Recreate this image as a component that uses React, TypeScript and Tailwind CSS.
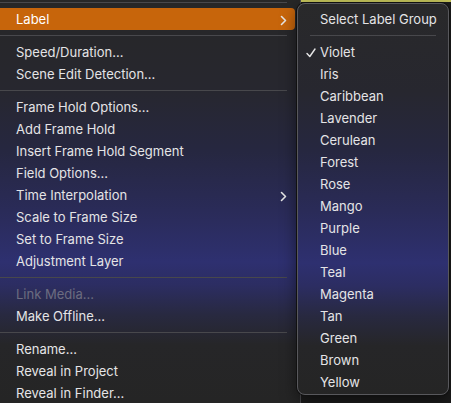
import React from 'react';

type Item = { label: string; sub?: boolean; disabled?: boolean; active?: boolean } | 'sep';

const mainItems: Item[] = [
  { label: 'Label', sub: true, active: true },
  'sep',
  { label: 'Speed/Duration...' },
  { label: 'Scene Edit Detection...' },
  'sep',
  { label: 'Frame Hold Options...' },
  { label: 'Add Frame Hold' },
  { label: 'Insert Frame Hold Segment' },
  { label: 'Field Options...' },
  { label: 'Time Interpolation', sub: true },
  { label: 'Scale to Frame Size' },
  { label: 'Set to Frame Size' },
  { label: 'Adjustment Layer' },
  'sep',
  { label: 'Link Media...', disabled: true },
  { label: 'Make Offline...' },
  'sep',
  { label: 'Rename...' },
  { label: 'Reveal in Project' },
  { label: 'Reveal in Finder...' },
];

const labels = [
  'Violet', 'Iris', 'Caribbean', 'Lavender', 'Cerulean', 'Forest', 'Rose', 'Mango',
  'Purple', 'Blue', 'Teal', 'Magenta', 'Tan', 'Green', 'Brown', 'Yellow',
];

const Chevron = () => (
  <svg width="7" height="11" viewBox="0 0 7 11" className="shrink-0">
    <polyline points="1.5,1.5 5.5,5.5 1.5,9.5" fill="none" stroke="#e6e6e6" strokeWidth="1.6" strokeLinecap="round" strokeLinejoin="round" />
  </svg>
);

const Check = () => (
  <svg width="10" height="10" viewBox="0 0 10 10">
    <polyline points="1,5.5 3.8,8.5 9,1" fill="none" stroke="#e6e6e6" strokeWidth="1.4" strokeLinecap="round" strokeLinejoin="round" />
  </svg>
);

export default function App() {
  return (
    <div
      className="relative w-[451px] h-[403px] overflow-hidden flex text-[13px] text-[#e4e4e6]"
      style={{ fontFamily: 'Inter, "Liberation Sans", sans-serif' }}
    >
      <div className="w-[301px] h-full border-r border-[#4a4a4e] bg-[linear-gradient(180deg,#272727_0px,#27272f_90px,#262740_150px,#2a2b58_210px,#2e3070_262px,#2c2d62_285px,#282940_315px,#262628_345px,#252525_403px)]">
        <div className="mt-[2px] mb-[5px] h-px w-[287px] bg-[#48484c]" />
        {mainItems.map((it, i) =>
          it === 'sep' ? (
            <div key={i} className="my-[5px] h-px w-[287px] bg-[#48484c]" />
          ) : (
            <div
              key={i}
              className={`h-[22px] w-[295px] flex items-center justify-between pt-[2px] pl-[16px] pr-[8px] rounded-r-[4px] ${
                it.active ? 'bg-[#c7650b] text-white' : ''
              } ${it.disabled ? 'text-[#6c6c80]' : ''}`}
            >
              <span>{it.label}</span>
              {it.sub && <Chevron />}
            </div>
          )
        )}
      </div>
      <div className="flex-1 h-full bg-[#1c1c1c] border-t-2 border-[#c4c25a]" />

      <div className="absolute left-[297px] top-[3px] w-[152px] h-[392px] rounded-[8px] border border-[#58585c] shadow-[0_0_0_1px_#111,0_6px_16px_rgba(0,0,0,0.5)] bg-[linear-gradient(180deg,#29292a_0px,#27272f_87px,#262740_147px,#2a2b58_207px,#2e3070_259px,#2c2d62_282px,#282940_312px,#262628_342px,#252525_392px)]">
        <div className="pt-[4px] flex flex-col">
          <div className="h-[22px] flex items-center pt-[2px] pl-[22px]">Select Label Group</div>
          <div className="mx-[12px] my-[5px] h-px bg-[#48484c]" />
          {labels.map((l, i) => (
            <div key={l} className="h-[22px] flex items-center pt-[2px] pl-[8px]">
              <span className="w-[14px] flex items-center">{i === 0 && <Check />}</span>
              {l}
            </div>
          ))}
        </div>
      </div>
    </div>
  );
}
